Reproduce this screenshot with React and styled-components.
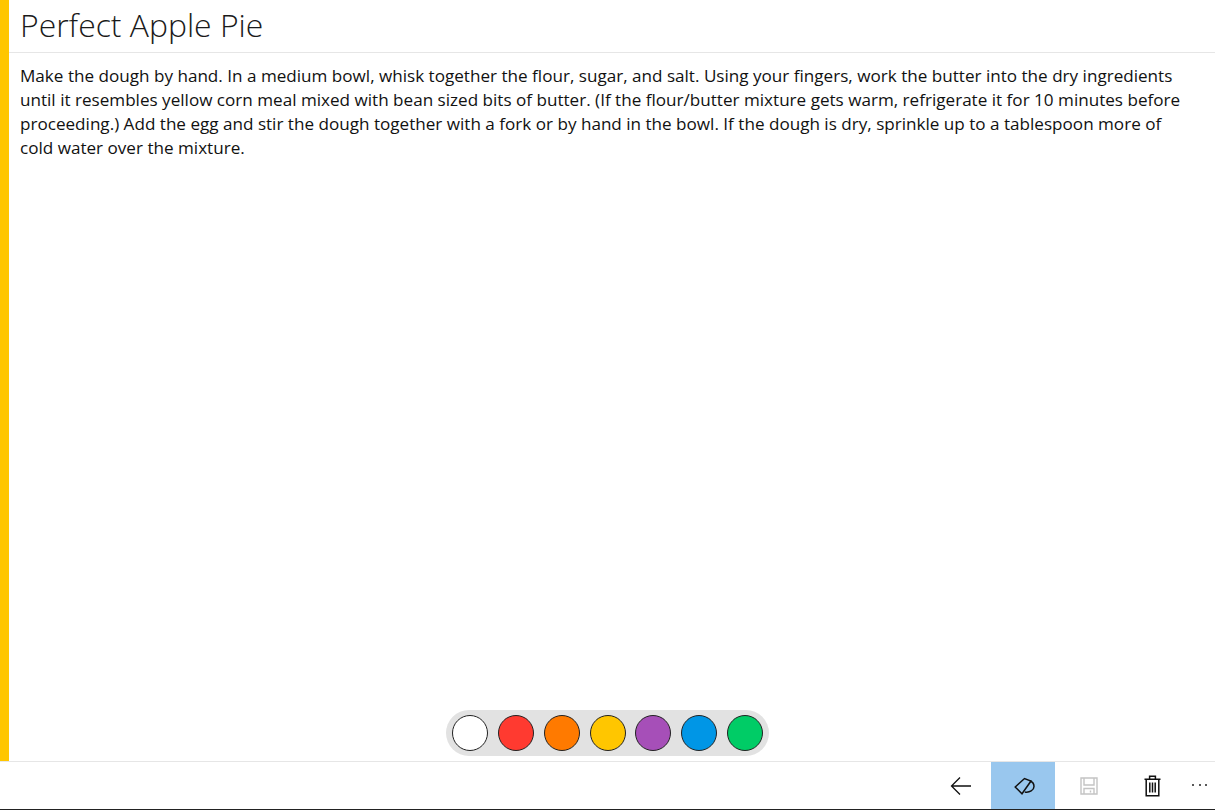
import React from "react";
import styled, { createGlobalStyle } from "styled-components";

const GlobalStyle = createGlobalStyle`
  html, body {
    margin: 0;
    padding: 0;
    background: #fff;
  }
  body {
    font-family: "Open Sans", "Noto Sans", sans-serif;
    color: #111;
  }
`;

const COLORS = ["#ffffff", "#ff3a30", "#ff7a00", "#ffc600", "#a64fb8", "#0096e6", "#00cc66"];

export default function App() {
  return (
    <Page>
      <GlobalStyle />
      <Main>
        <Accent />
        <Content>
          <TitleBar>
            <Title>Perfect Apple Pie</Title>
          </TitleBar>
          <Body>
            Make the dough by hand. In a medium bowl, whisk together the flour, sugar, and salt. Using your fingers, work the butter into the dry ingredients until it resembles yellow corn meal mixed with bean sized bits of butter. (If the flour/butter mixture gets warm, refrigerate it for 10 minutes before proceeding.) Add the egg and stir the dough together with a fork or by hand in the bowl. If the dough is dry, sprinkle up to a tablespoon more of cold water over the mixture.
          </Body>
          <PaletteRow>
            <Palette>
              {COLORS.map((c) => (
                <Swatch key={c} $color={c} />
              ))}
            </Palette>
          </PaletteRow>
        </Content>
      </Main>
      <CommandBar>
        <IconButton>
          <svg width="22" height="20" viewBox="0 0 22 20" fill="none" stroke="#111" strokeWidth="1.3">
            <path d="M21 10H1.5M10 1.5L1.5 10l8.5 8.5" />
          </svg>
        </IconButton>
        <IconButton $active>
          <svg width="21" height="18" viewBox="0 0 21 18" fill="none" stroke="#111" strokeWidth="1.5">
            <path d="M1.2 10L10.5 1.5L17 4L8 16.8Z" />
            <path d="M16 3.8C18.6 5 20 7.5 20 9.5C20 13 15.5 16 10.8 15" />
          </svg>
        </IconButton>
        <IconButton>
          <svg width="18" height="18" viewBox="0 0 18 18" fill="none" stroke="#c4c4c4" strokeWidth="1.4">
            <path d="M1 1H17V17H1Z" />
            <path d="M4 1V8H14V1M4 17V11.5H14V17M10.5 13.5V15.5" />
          </svg>
        </IconButton>
        <IconButton>
          <svg width="17" height="22" viewBox="0 0 17 22" fill="none" stroke="#111" strokeWidth="1.5">
            <path d="M0.5 4.2H16.5M5.6 4V1.2H11.4V4M2.2 4.2V20.8H14.8V4.2" />
            <path d="M5.8 7.5V17.5M8.5 7.5V17.5M11.2 7.5V17.5" />
          </svg>
        </IconButton>
        <MoreButton>
          <Dot />
          <Dot />
          <Dot />
        </MoreButton>
      </CommandBar>
    </Page>
  );
}

const Page = styled.div`
  width: 1215px;
  height: 810px;
  display: flex;
  flex-direction: column;
  overflow: hidden;
`;

const Main = styled.div`
  height: 761px;
  display: flex;
`;

const Accent = styled.div`
  width: 9px;
  background: #ffc600;
`;

const Content = styled.div`
  flex: 1;
  display: flex;
  flex-direction: column;
`;

const TitleBar = styled.div`
  height: 53px;
  box-sizing: border-box;
  padding-left: 11px;
  padding-bottom: 3px;
  border-bottom: 1px solid #e6e6e6;
  display: flex;
  align-items: center;
`;

const Title = styled.h1`
  margin: 0;
  font-size: 31.9px;
  font-weight: 300;
  line-height: 48px;
  color: #1a1a1a;
`;

const Body = styled.p`
  flex: 1;
  margin: 0;
  padding: 11px 25px 0 11px;
  font-size: 17.1px;
  line-height: 24px;
`;

const PaletteRow = styled.div`
  display: flex;
  justify-content: center;
  padding: 0 0 5px 0;
  margin-left: -9px;
`;

const Palette = styled.div`
  display: flex;
  gap: 9.85px;
  padding: 5px 5.5px;
  background: #e2e2e2;
  border-radius: 23px;
`;

const Swatch = styled.span`
  width: 36px;
  height: 36px;
  box-sizing: border-box;
  border-radius: 50%;
  border: 1.5px solid #222;
  background: ${(p) => p.$color};
`;

const CommandBar = styled.div`
  height: 49px;
  box-sizing: border-box;
  border-top: 1px solid #e6e6e6;
  border-bottom: 1px solid #222;
  display: flex;
  justify-content: flex-end;
`;

const IconButton = styled.div`
  width: 64px;
  box-sizing: border-box;
  padding-left: 3px;
  display: flex;
  align-items: center;
  justify-content: center;
  background: ${(p) => (p.$active ? "#99c7ee" : "transparent")};
`;

const MoreButton = styled.div`
  width: 32px;
  box-sizing: border-box;
  padding: 0 8px 1px 9px;
  display: flex;
  align-items: center;
  justify-content: space-between;
`;

const Dot = styled.span`
  width: 2px;
  height: 2px;
  border-radius: 50%;
  background: #222;
`;
